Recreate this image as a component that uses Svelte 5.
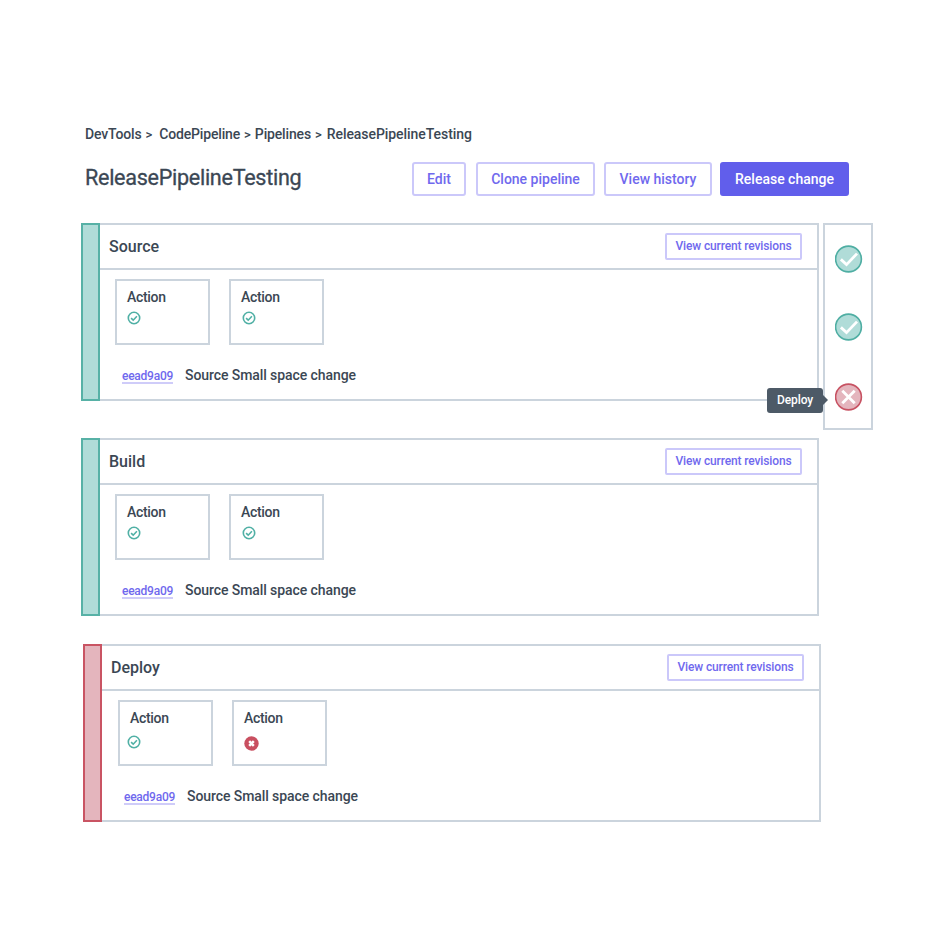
<script>
  const crumbs = ['DevTools', 'CodePipeline', 'Pipelines', 'ReleasePipelineTesting'];
  const stages = [
    { name: 'Source', status: 'ok', actions: ['ok', 'ok'] },
    { name: 'Build', status: 'ok', actions: ['ok', 'ok'] },
    { name: 'Deploy', status: 'failed', actions: ['ok', 'failed'] }
  ];
</script>

<main>
  <nav>
    {#each crumbs as crumb, i}
      {#if i > 0}<span class="sep" class:wide={i === 1}>&gt;</span>{/if}<span class="crumb">{crumb}</span>
    {/each}
  </nav>

  <header>
    <h1>ReleasePipelineTesting</h1>
    <button class="edit">Edit</button>
    <button class="clone">Clone pipeline</button>
    <button class="history">View history</button>
    <button class="release">Release change</button>
  </header>

  <div class="board">
    <div class="stages">
      {#each stages as stage}
        <section class="stage {stage.status}">
          <div class="bar"></div>
          <div class="content">
            <div class="head">
              <h2>{stage.name}</h2>
              <button class="revisions">View current revisions</button>
            </div>
            <div class="actions">
              {#each stage.actions as action}
                <div class="action">
                  <span>Action</span>
                  {#if action === 'ok'}
                    <svg class="tick" width="14" height="14" viewBox="0 0 14 14">
                      <circle cx="7" cy="7" r="5.7" />
                      <path d="M4.1 7.2 6.2 9.2 9.9 5.2" />
                    </svg>
                  {:else}
                    <svg class="cross" width="15" height="15" viewBox="0 0 15 15">
                      <circle cx="7.5" cy="7.5" r="7.2" />
                      <path d="M5.2 5.2l4.6 4.6M9.8 5.2 5.2 9.8" />
                    </svg>
                  {/if}
                </div>
              {/each}
            </div>
            <div class="commit">
              <a href="#commit">eead9a09</a>
              <span>Source Small space change</span>
            </div>
          </div>
        </section>
      {/each}
    </div>

    <aside>
      {#each stages as stage}
        <div class="dot">
          <svg class={stage.status} width="28" height="28" viewBox="0 0 28 28">
            <circle cx="13.5" cy="14" r="12.9" />
            {#if stage.status === 'ok'}
              <path d="M5.9 14.4 11.5 19.6 22 8.6" />
            {:else}
              <path d="M7.3 7.8l12.4 12.4M19.7 7.8 7.3 20.2" />
            {/if}
          </svg>
          {#if stage.status === 'failed'}
            <div class="tip">{stage.name}</div>
          {/if}
        </div>
      {/each}
    </aside>
  </div>
</main>

<style>
  :global(body) { background: #fff; }
  main {
    box-sizing: border-box;
    width: 946px;
    height: 938px;
    padding: 124px 0 0 81px;
    overflow: hidden;
    background: #fff;
    color: #3b4754;
    font-family: Roboto, "Liberation Sans", sans-serif;
    font-weight: 500;
  }
  nav {
    display: flex;
    align-items: center;
    height: 20px;
    padding-left: 4px;
    font-size: 14px;
    white-space: nowrap;
  }
  .crumb { letter-spacing: -0.16px; }
  .crumb:last-child { letter-spacing: -0.06px; }
  .sep { margin: 0 4px; font-size: 13px; }
  .sep.wide { margin-right: 7px; }
  .sep:nth-last-child(2) { margin-right: 5px; }
  header {
    display: flex;
    align-items: center;
    height: 34px;
    margin-top: 18px;
    padding-left: 4px;
  }
  h1 {
    width: 327px;
    margin: 0;
    padding-bottom: 3px;
    font-size: 21.6px;
    line-height: 28px;
    font-weight: 400;
    letter-spacing: -0.3px;
    -webkit-text-stroke: 0.3px;
  }
  button {
    box-sizing: border-box;
    padding: 0;
    border: 2px solid #cbc8fa;
    border-radius: 3px;
    background: #fff;
    color: #7069ee;
    font: 500 14px/20px Roboto, "Liberation Sans", sans-serif;
    white-space: nowrap;
  }
  header button { height: 34px; }
  .edit { width: 54px; }
  .clone { width: 119px; margin-left: 10px; }
  .history { width: 108px; margin-left: 9px; }
  .release {
    width: 129px;
    margin-left: 8px;
    border-color: #615eeb;
    background: #615eeb;
    color: #fff;
  }
  .board { display: flex; align-items: flex-start; margin-top: 27px; }
  .stages { width: 742px; }
  .stage { display: flex; width: 738px; height: 178px; }
  .stage:nth-child(2) { margin-top: 37px; }
  .stage:nth-child(3) { margin: 28px 0 0 2px; }
  .bar {
    box-sizing: border-box;
    width: 19px;
    border: 2px solid #57b1a6;
    background: #b0dcd8;
  }
  .failed .bar { border-color: #c95463; background: #e4b5bd; }
  .content {
    box-sizing: border-box;
    width: 719px;
    border: 2px solid #cbd4dd;
    border-left: 0;
  }
  .head {
    box-sizing: border-box;
    display: flex;
    align-items: center;
    justify-content: space-between;
    height: 45px;
    padding: 0 15px 0 9px;
    border-bottom: 2px solid #cbd4dd;
  }
  h2 { margin: 0; font-size: 16px; line-height: 20px; font-weight: 500; }
  .revisions {
    width: 137px;
    height: 27px;
    padding-bottom: 2px;
    border-radius: 2px;
    font-size: 12px;
    line-height: 16px;
    letter-spacing: -0.13px;
  }
  .actions { display: flex; gap: 19px; padding: 9px 0 0 15px; }
  .failed .actions { padding-left: 16px; }
  .action {
    box-sizing: border-box;
    width: 95px;
    height: 66px;
    padding: 6px 0 0 10px;
    border: 2px solid #cbd4dd;
  }
  .action span {
    display: block;
    height: 24px;
    font-size: 14px;
    line-height: 20px;
    letter-spacing: -0.3px;
  }
  .action svg { display: block; }
  .action + .action .tick { margin-left: 1px; }
  .failed .tick { margin: 3px 0 0 -3px; }
  .cross { margin-top: 4px; }
  .tick { fill: none; stroke: #50b0a5; stroke-width: 1.6; }
  .cross { fill: #c94f60; }
  .cross path { stroke: #fff; stroke-width: 2.5; }
  .commit { display: flex; align-items: flex-start; padding: 20px 0 0 22px; }
  a {
    box-sizing: border-box;
    width: 51px;
    height: 17px;
    margin: 2px 12px 0 0;
    padding-top: 1px;
    border-bottom: 2px solid #cfccf9;
    color: #7069ee;
    font-size: 12px;
    line-height: 16px;
    letter-spacing: -0.25px;
    text-decoration: none;
  }
  .commit span { font-size: 14px; line-height: 20px; letter-spacing: -0.08px; }
  aside {
    box-sizing: border-box;
    width: 50px;
    height: 207px;
    padding: 20px 0 0 10px;
    border: 2px solid #cbd4dd;
  }
  .dot { position: relative; width: 28px; height: 28px; margin-bottom: 39.5px; }
  .dot:nth-child(2) { margin-bottom: 42.5px; }
  .dot svg { display: block; fill: none; stroke-width: 1.6; }
  .dot .ok circle { fill: #b0dcd8; stroke: #4faea3; }
  .dot .failed circle { fill: #e4b5bd; stroke: #c75262; }
  .dot path { stroke: #fff; stroke-width: 2.8; }
  .tip {
    position: absolute;
    top: 5px;
    right: 40px;
    width: 56px;
    height: 25px;
    border-radius: 3px;
    background: #4d5a67;
    color: #fff;
    font-size: 12px;
    line-height: 25px;
    text-align: center;
    letter-spacing: -0.1px;
  }
  .tip::after {
    content: "";
    position: absolute;
    left: 56px;
    top: 7px;
    border: 5px solid transparent;
    border-left-color: #4d5a67;
    border-right: 0;
  }
</style>
